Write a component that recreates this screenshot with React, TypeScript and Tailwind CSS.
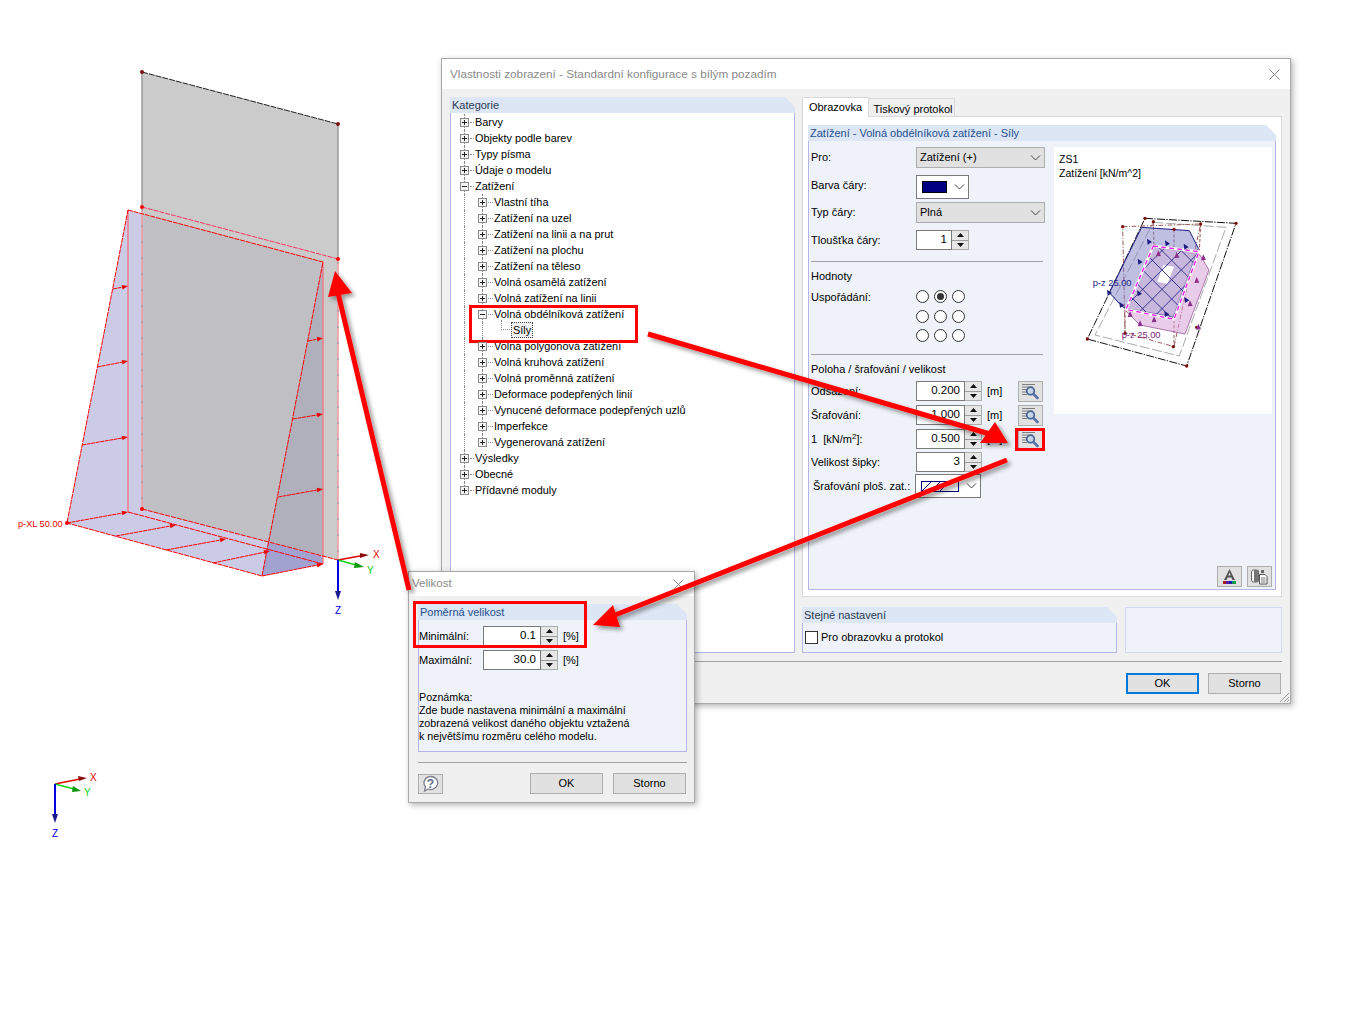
import React from "react";

const FONT = { fontFamily: '"Liberation Sans", Arial, sans-serif' };

function ChevronD() {
  return (
    <svg width="11" height="6" viewBox="0 0 11 6" className="shrink-0">
      <path d="M1 0.5 L5.5 5 L10 0.5" fill="none" stroke="#444" strokeWidth="1" />
    </svg>
  );
}

function Combo({ text }: { text: string }) {
  return (
    <div className="flex h-full w-[129px] items-center justify-between border border-[#adadad] bg-[#e1e1e1] pl-[3px] pr-[3px] text-[11px] text-black">
      <span>{text}</span>
      <ChevronD />
    </div>
  );
}

function Spinner() {
  return (
    <div className="flex h-full w-[17px] shrink-0 flex-col border border-l-0 border-[#adadad] bg-[#e6e6e6]">
      <div className="flex flex-1 items-center justify-center border-b border-[#9a9a9a]">
        <svg width="7" height="4" viewBox="0 0 7 4"><path d="M3.5 0 L7 4 L0 4 Z" fill="#111" /></svg>
      </div>
      <div className="flex flex-1 items-center justify-center">
        <svg width="7" height="4" viewBox="0 0 7 4"><path d="M0 0 L7 0 L3.5 4 Z" fill="#111" /></svg>
      </div>
    </div>
  );
}

function Spin({ value, width }: { value: string; width: string }) {
  return (
    <div className="flex h-full">
      <div className={`flex h-full items-center justify-end border border-[#7a7a7a] bg-white pr-[4px] text-[11.5px] text-black ${width}`}>
        {value}
      </div>
      <Spinner />
    </div>
  );
}

function SearchIcon() {
  return (
    <svg width="19" height="17" viewBox="0 0 19 17">
      <path d="M1 1.5H14M1 4H12M1 6.5H6M1 9H5M1 11.5H6" stroke="#7f7f7f" strokeWidth="1" />
      <circle cx="9.5" cy="8" r="3.8" fill="#c5d4e6" stroke="#3f5f8e" strokeWidth="1.6" />
      <path d="M12.5 11 L16.5 15" stroke="#5670a8" strokeWidth="2.6" strokeLinecap="round" />
    </svg>
  );
}

function IconButton({ children }: { children: React.ReactNode }) {
  return (
    <div className="flex h-[21px] w-[25px] shrink-0 items-center justify-center border border-[#adadad] bg-[#e1e1e1]">
      {children}
    </div>
  );
}

function Radio({ on }: { on?: boolean }) {
  return (
    <div className="flex h-[13px] w-[13px] items-center justify-center rounded-full border border-[#333] bg-white">
      {on && <div className="h-[7px] w-[7px] rounded-full bg-[#333]" />}
    </div>
  );
}

function GroupHeader({ text, dark }: { text: string; dark?: boolean }) {
  return (
    <div
      className={`h-[16px] bg-[#dce6f4] pl-[2px] text-[11px] leading-[16px] ${dark ? "text-[#2a3a55]" : "text-[#24508f]"} [clip-path:polygon(0_0,calc(100%-10px)_0,100%_10px,100%_100%,0_100%)]`}
    >
      {text}
    </div>
  );
}

type TreeRow = { t: string; lvl: 0 | 1 | 2; open?: boolean; last?: boolean };

const TREE: TreeRow[] = [
  { t: "Barvy", lvl: 0 },
  { t: "Objekty podle barev", lvl: 0 },
  { t: "Typy písma", lvl: 0 },
  { t: "Údaje o modelu", lvl: 0 },
  { t: "Zatížení", lvl: 0, open: true },
  { t: "Vlastní tíha", lvl: 1 },
  { t: "Zatížení na uzel", lvl: 1 },
  { t: "Zatížení na linii a na prut", lvl: 1 },
  { t: "Zatížení na plochu", lvl: 1 },
  { t: "Zatížení na těleso", lvl: 1 },
  { t: "Volná osamělá zatížení", lvl: 1 },
  { t: "Volná zatížení na linii", lvl: 1 },
  { t: "Volná obdélníková zatížení", lvl: 1, open: true },
  { t: "Síly", lvl: 2 },
  { t: "Volná polygonová zatížení", lvl: 1 },
  { t: "Volná kruhová zatížení", lvl: 1 },
  { t: "Volná proměnná zatížení", lvl: 1 },
  { t: "Deformace podepřených linií", lvl: 1 },
  { t: "Vynucené deformace podepřených uzlů", lvl: 1 },
  { t: "Imperfekce", lvl: 1 },
  { t: "Vygenerovaná zatížení", lvl: 1, last: true },
  { t: "Výsledky", lvl: 0 },
  { t: "Obecné", lvl: 0 },
  { t: "Přídavné moduly", lvl: 0, last: true },
];

function ExpandBox({ open }: { open?: boolean }) {
  return (
    <svg width="9" height="9" viewBox="0 0 9 9" className="shrink-0">
      <rect x="0.5" y="0.5" width="8" height="8" fill="#f4f4f4" stroke="#8a8a8a" />
      <path d={open ? "M2 4.5H7" : "M2 4.5H7M4.5 2V7"} stroke="#222" />
    </svg>
  );
}

function TreeItem({ r, inLoad }: { r: TreeRow; inLoad: boolean }) {
  const left = r.lvl === 0 ? "pl-[9px]" : r.lvl === 1 ? "pl-[27px]" : "pl-[60px]";
  return (
    <div className={`relative flex h-[16px] items-center text-[10.9px] text-black ${left}`}>
      <span className={`absolute left-[13px] top-0 w-0 border-l border-dotted border-[#8a8a8a] ${r.last && r.lvl === 0 ? "h-[8px]" : "h-[16px]"}`} />
      {inLoad && (
        <span className={`absolute left-[31px] top-0 w-0 border-l border-dotted border-[#8a8a8a] ${r.last ? "h-[8px]" : "h-[16px]"}`} />
      )}
      {r.lvl < 2 ? (
        <>
          <span className="relative z-10 flex"><ExpandBox open={r.open} /></span>
          <span className={`ml-[1px] mr-[1px] border-t border-dotted border-[#8a8a8a] ${r.lvl === 0 ? "w-[4px]" : "w-[5px]"}`} />
          <span>{r.t}</span>
        </>
      ) : (
        <>
          <span className="absolute left-[50px] top-[-2px] h-[10px] w-[9px] border-b border-l border-dotted border-[#8a8a8a]" />
          <span className="border border-dotted border-[#444] bg-[#f0f0f0] px-[1px] leading-[14px]">{r.t}</span>
        </>
      )}
    </div>
  );
}

function LabelRow({ label, h, mt, children, up }: { label: React.ReactNode; h: string; mt: string; children: React.ReactNode; up?: boolean }) {
  return (
    <div className={`flex items-center text-[11px] text-black ${h} ${mt}`}>
      <span className={`w-[105px] shrink-0 whitespace-nowrap ${up ? "mb-[4px]" : ""}`}>{label}</span>
      {children}
    </div>
  );
}

function ValueRow({ label, value, mt, unit }: { label: React.ReactNode; value: string; mt: string; unit?: boolean }) {
  return (
    <div className={`flex h-[20px] items-center text-[11px] text-black ${mt}`}>
      <span className="w-[105px] shrink-0 whitespace-nowrap">{label}</span>
      <Spin value={value} width="w-[49px]" />
      {unit && <span className="ml-[5px] w-[31px] shrink-0">[m]</span>}
      {unit && <IconButton><SearchIcon /></IconButton>}
    </div>
  );
}

function Preview() {
  const steps = Array.from({ length: 10 }, (_, i) => i);
  return (
    <svg viewBox="0 0 720 720" className="absolute left-[-4px] top-[-7px] h-[240px] w-[240px]">
      <defs>
        <clipPath id="hatchClip">
          <path d="M310 318 L447 335 L372 538 L228 508 Z" />
        </clipPath>
      </defs>
      <path d="M285 235 L558 250 L410 678 L112 597 Z" fill="none" stroke="#111" strokeWidth="3" strokeDasharray="24 4 4 4" />
      <path d="M310 247 L528 262 L388 648 L135 585 Z" fill="none" stroke="#aaa" strokeWidth="3" strokeDasharray="30 8" />
      <path d="M218 260 L452 252 L372 620 L225 578 Z" fill="none" stroke="#9a5a5a" strokeWidth="3" strokeDasharray="14 5 3 5" />
      <path d="M310 245 L312 320 M372 268 L372 330 M452 252 L448 335 M372 540 L372 620 M225 510 L225 578" stroke="#9a5a5a" strokeWidth="3" strokeDasharray="10 5" />
      <path d="M450 345 L477 390 L405 582 L270 555 L225 510 L310 320 Z" fill="#d7a3d7" fillOpacity="0.55" stroke="#8b3f8b" strokeWidth="2" />
      <path d="M275 262 L418 272 L445 325 L370 530 L225 505 L215 498 L178 458 Z" fill="#7f7fc6" fillOpacity="0.5" stroke="#1d1d80" strokeWidth="3" />
      <path d="M310 318 L447 335 L372 538 L228 508 Z" fill="#d9c4e2" fillOpacity="0.55" />
      <path d="M340 375 L372 380 L352 432 L322 425 Z" fill="#fff" />
      <g clipPath="url(#hatchClip)" stroke="#1d1d80" strokeWidth="2.5">
        {steps.map((i) => (
          <path key={`a${i}`} d={`M150 ${460 + i * 58} L550 ${60 + i * 58}`} />
        ))}
        {steps.map((i) => (
          <path key={`b${i}`} d={`M150 ${30 + i * 58} L550 ${430 + i * 58}`} />
        ))}
      </g>
      <path d="M310 318 L447 335 L372 538 L228 508 Z" fill="none" stroke="#fff" strokeWidth="8" />
      <path d="M310 318 L447 335 L372 538 L228 508 Z" fill="none" stroke="#e81fe8" strokeWidth="4" strokeDasharray="14 10" />
      {[[285, 235], [310, 245], [218, 260], [372, 268], [452, 252], [558, 250], [112, 597], [410, 678], [370, 620], [225, 580], [440, 562]].map(([x, y]) => (
        <circle key={`${x}-${y}`} cx={x} cy={y} r="5" fill="#7a1010" />
      ))}
      {[[298, 305], [352, 310], [408, 320], [270, 365], [178, 458], [215, 495], [350, 522], [410, 480], [268, 460]].map(([x, y]) => (
        <path key={`t${x}`} d={`M${x - 7} ${y - 9} L${x + 8} ${y + 1} L${x - 5} ${y + 9} Z`} fill="#1d1d80" />
      ))}
      {[[460, 352], [440, 420], [420, 490], [445, 560], [312, 538], [270, 550], [240, 522], [325, 340], [380, 345]].map(([x, y]) => (
        <path key={`u${x}`} d={`M${x - 7} ${y + 9} L${x} ${y - 9} L${x + 8} ${y + 8} Z`} fill="#8b2f8b" />
      ))}
      <text x="128" y="438" fontSize="28" fill="#1d1d80" style={FONT}>p-z 25.00</text>
      <text x="215" y="594" fontSize="28" fill="#7a1a7a" style={FONT}>p-z 25.00</text>
    </svg>
  );
}

function DialogFooterButton({ text, primary }: { text: string; primary?: boolean }) {
  return (
    <div
      className={`flex h-[21px] w-[73px] items-center justify-center bg-[#e1e1e1] text-[11px] text-black ${primary ? "border-2 border-[#0078d7]" : "border border-[#adadad]"}`}
    >
      {text}
    </div>
  );
}

function CloseX() {
  return (
    <svg width="11" height="11" viewBox="0 0 11 11">
      <path d="M0.5 0.5 L10.5 10.5 M10.5 0.5 L0.5 10.5" stroke="#8a8a8a" strokeWidth="1" />
    </svg>
  );
}

function MainDialog() {
  let inLoad = false;
  return (
    <div
      className="absolute left-[441px] top-[58px] flex h-[646px] w-[850px] flex-col border border-[#a9a9a9] bg-[#f0f0f0] shadow-[2px_2px_6px_rgba(0,0,0,0.3)]"
      style={FONT}
    >
      <div className="flex h-[30px] items-center justify-between bg-white pl-[8px] pr-[10px] text-[11.75px] text-[#8a8a8a]">
        <span>Vlastnosti zobrazení - Standardní konfigurace s bílým pozadím</span>
        <CloseX />
      </div>
      <div className="flex flex-col px-[8px] pt-[8px]">
        <div className="flex h-[556px] gap-[7px]">
          <div className="flex w-[345px] flex-col">
            <GroupHeader text="Kategorie" dark />
            <div className="flex-1 border border-t-0 border-[#b4b4e6] bg-white pt-[1px]">
              {TREE.map((r) => {
                const inner = inLoad;
                if (r.t === "Zatížení") inLoad = true;
                if (r.t === "Výsledky") inLoad = false;
                const show = r.t === "Výsledky" ? false : inner;
                return <TreeItem key={r.t} r={r} inLoad={show} />;
              })}
            </div>
          </div>
          <div className="flex w-[480px] flex-col">
            <div className="flex h-[19px] items-end whitespace-nowrap text-[11px] text-black">
              <div className="z-10 mb-[-1px] flex h-[20px] w-[67px] items-center justify-center border border-b-0 border-[#d9d9d9] bg-white">Obrazovka</div>
              <div className="flex h-[18px] w-[86px] items-center justify-center border border-l-0 border-b-0 border-[#d9d9d9] bg-[#f0f0f0] pl-[3px] pt-[3px]">Tiskový protokol</div>
            </div>
            <div className="h-[481px] border border-[#d9d9d9] bg-white px-[5px] pt-[8px]">
              <div className="flex h-[465px] flex-col">
                <GroupHeader text="Zatížení - Volná obdélníková zatížení - Síly" />
                <div className="flex flex-1 border border-t-0 border-[#b4b4e6] bg-[#eff3f9] pl-[1px]">
                  <div className="w-[235px] shrink-0 pl-[1px]">
                    <LabelRow label="Pro:" h="h-[21px]" mt="mt-[6px]"><Combo text="Zatížení (+)" /></LabelRow>
                    <LabelRow label="Barva čáry:" h="h-[24px]" mt="mt-[7px]" up>
                      <div className="flex h-full w-[53px] items-center justify-between border border-[#7a7a7a] bg-white pl-[5px] pr-[3px]">
                        <div className="h-[12px] w-[25px] border border-black bg-[#000080]" />
                        <ChevronD />
                      </div>
                    </LabelRow>
                    <LabelRow label="Typ čáry:" h="h-[21px]" mt="mt-[3px]"><Combo text="Plná" /></LabelRow>
                    <LabelRow label="Tloušťka čáry:" h="h-[20px]" mt="mt-[7px]"><Spin value="1" width="w-[36px]" /></LabelRow>
                    <div className="mt-[11px] h-px w-[232px] bg-[#a0a0a0]" />
                    <div className="mt-[7px] h-[14px] text-[11px] leading-[14px] text-black">Hodnoty</div>
                    <div className="mt-[7px] flex text-[11px] text-black">
                      <span className="w-[105px] pt-[1px] leading-[13px]">Uspořádání:</span>
                      <div className="grid grid-cols-3 gap-x-[5px] gap-y-[6.5px]">
                        <Radio /><Radio on /><Radio />
                        <Radio /><Radio /><Radio />
                        <Radio /><Radio /><Radio />
                      </div>
                    </div>
                    <div className="mt-[12px] h-px w-[232px] bg-[#a0a0a0]" />
                    <div className="mt-[7px] h-[14px] text-[11px] leading-[14px] text-black">Poloha / šrafování / velikost</div>
                    <ValueRow label="Odsazení:" value="0.200" mt="mt-[5px]" unit />
                    <ValueRow label="Šrafování:" value="1.000" mt="mt-[4px]" unit />
                    <ValueRow label={<span>1&nbsp; [kN/m<sup className="text-[8px]">2</sup>]:</span>} value="0.500" mt="mt-[4px]" unit />
                    <ValueRow label="Velikost šipky:" value="3" mt="mt-[3px]" />
                    <div className="mt-[2px] flex h-[24px] items-center text-[11px] text-black">
                      <span className="ml-[2px] w-[102px] shrink-0 whitespace-nowrap">Šrafování ploš. zat.:</span>
                      <div className="flex h-full w-[66px] items-center justify-between border border-[#7a7a7a] bg-white pl-[5px] pr-[3px]">
                        <svg width="38" height="11" viewBox="0 0 38 11">
                          <rect x="0.5" y="0.5" width="37" height="10" fill="#fff" stroke="#000080" />
                          <path d="M1 10 L10 1 M19 10 L28 1 M10 10 L19 1" stroke="#000080" />
                        </svg>
                        <ChevronD />
                      </div>
                    </div>
                  </div>
                  <div className="flex flex-1 flex-col pl-[9px] pr-[3px] pt-[6px]">
                    <div className="relative h-[267px] w-[218px] bg-white pl-[5px] pt-[5px] text-[10.5px] leading-[14px] text-black">
                      <div>ZS1</div>
                      <div>Zatížení [kN/m^2]</div>
                      <Preview />
                    </div>
                    <div className="mt-[152px] flex justify-end gap-[5px]">
                      <IconButton>
                        <svg width="19" height="17" viewBox="0 0 19 17">
                          <path d="M9.5 1 L4 12 H6.6 L7.6 9.5 H11.4 L12.4 12 H15 Z M8.4 7.5 L9.5 4.5 L10.6 7.5 Z" fill="#555" fillRule="evenodd" />
                          <rect x="3" y="13" width="3" height="3" fill="#a02020" />
                          <rect x="6" y="13" width="3" height="3" fill="#5a1f9c" />
                          <rect x="9" y="13" width="3" height="3" fill="#2020b0" />
                          <rect x="12" y="13" width="2" height="3" fill="#109060" />
                          <rect x="14" y="13" width="2" height="3" fill="#10a040" />
                        </svg>
                      </IconButton>
                      <IconButton>
                        <svg width="19" height="17" viewBox="0 0 19 17">
                          <rect x="1.5" y="2" width="7" height="12" rx="2" fill="#fff" stroke="#666" />
                          <rect x="4" y="2" width="4.5" height="12" fill="#777" />
                          <path d="M9.5 6.5 H15 L17 8.5 V16 H9.5 Z" fill="#fff" stroke="#555" />
                          <path d="M11 10 H15.5 M11 12 H15.5 M11 14 H15.5" stroke="#777" />
                          <rect x="11" y="2" width="3" height="3" fill="#666" />
                        </svg>
                      </IconButton>
                    </div>
                  </div>
                </div>
              </div>
            </div>
            <div className="mt-[10px] flex h-[46px] gap-[8px]">
              <div className="flex w-[315px] flex-col">
                <GroupHeader text="Stejné nastavení" dark />
                <div className="flex flex-1 items-center gap-[3px] border border-t-0 border-[#b4b4e6] bg-[#eff3f9] pl-[2px] text-[11px] text-black">
                  <div className="h-[13px] w-[13px] border border-[#333] bg-white" />
                  <span>Pro obrazovku a protokol</span>
                </div>
              </div>
              <div className="w-[157px] border border-[#d4d8f0] bg-[#eff3f9]" />
            </div>
          </div>
        </div>
        <div className="mt-[8px] h-px w-full bg-[#a0a0a0]" />
        <div className="mt-[11px] flex justify-end gap-[9px] pr-[1px]">
          <DialogFooterButton text="OK" primary />
          <DialogFooterButton text="Storno" />
        </div>
      </div>
      <svg width="12" height="12" viewBox="0 0 12 12" className="absolute bottom-0 right-0">
        <path d="M11 2 L2 11 M11 6 L6 11 M11 9 L9 11" stroke="#9a9a9a" />
      </svg>
    </div>
  );
}

function SmallDialog() {
  return (
    <div
      className="absolute left-[408px] top-[571px] flex h-[232px] w-[287px] flex-col border border-[#a9a9a9] bg-[#f0f0f0] shadow-[2px_2px_6px_rgba(0,0,0,0.3)]"
      style={FONT}
    >
      <div className="flex h-[24px] items-center justify-between bg-white pl-[3px] pr-[10px] text-[11.5px] text-[#8a8a8a]">
        <span>Velikost</span>
        <CloseX />
      </div>
      <div className="flex flex-col pl-[9px] pr-[8px] pt-[8px]">
        <div className="flex h-[148px] w-[269px] flex-col">
          <GroupHeader text="Poměrná velikost" />
          <div className="flex-1 border border-t-0 border-[#b4b4e6] bg-[#eff3f9] text-[11px] text-black">
            <div className="mt-[6px] flex h-[20px] items-center">
              <span className="w-[64px] shrink-0">Minimální:</span>
              <Spin value="0.1" width="w-[58px]" />
              <span className="ml-[5px]">[%]</span>
            </div>
            <div className="mt-[4px] flex h-[20px] items-center">
              <span className="w-[64px] shrink-0">Maximální:</span>
              <Spin value="30.0" width="w-[58px]" />
              <span className="ml-[5px]">[%]</span>
            </div>
            <div className="mt-[21px] text-[10.7px] leading-[13px]">
              <div>Poznámka:</div>
              <div>Zde bude nastavena minimální a maximální</div>
              <div>zobrazená velikost daného objektu vztažená</div>
              <div>k největšímu rozměru celého modelu.</div>
            </div>
          </div>
        </div>
        <div className="mt-[10px] h-px w-[269px] bg-[#a0a0a0]" />
        <div className="mt-[10px] flex items-center">
          <div className="flex h-[20px] w-[25px] items-center justify-center border border-[#adadad] bg-[#e1e1e1]">
            <svg width="17" height="17" viewBox="0 0 17 17">
              <path d="M8.5 1.5 A7 6.5 0 1 1 6 14 L2.5 16 L3.5 12 A7 6.5 0 0 1 8.5 1.5 Z" fill="#fff" stroke="#7d7d8c" strokeWidth="1.3" />
              <text x="8.5" y="12.5" textAnchor="middle" fontSize="12" fontWeight="700" fill="#5b6a8c" style={FONT}>?</text>
            </svg>
          </div>
          <div className="ml-auto flex gap-[10px]">
            <DialogFooterButton text="OK" />
            <DialogFooterButton text="Storno" />
          </div>
        </div>
      </div>
    </div>
  );
}

function SmallArrow({ a, b }: { a: [number, number]; b: [number, number] }) {
  const dx = b[0] - a[0];
  const dy = b[1] - a[1];
  const l = Math.hypot(dx, dy);
  const ux = dx / l;
  const uy = dy / l;
  const bx = b[0] - ux * 6;
  const by = b[1] - uy * 6;
  return (
    <g>
      <path d={`M${a[0]} ${a[1]} L${bx} ${by}`} stroke="#f00" strokeWidth="1" strokeDasharray="4 0.6" />
      <path d={`M${b[0]} ${b[1]} L${bx - uy * 2.3} ${by + ux * 2.3} L${bx + uy * 2.3} ${by - ux * 2.3} Z`} fill="#e80000" />
    </g>
  );
}

function Model() {
  const rows: [[number, number], [number, number]][] = [
    [[113, 289], [128, 286]],
    [[97, 367], [128, 361]],
    [[82, 445], [128, 437]],
    [[308, 341], [323, 338]],
    [[293, 419], [323, 414]],
    [[278, 497], [323, 489]],
    [[67, 523], [128, 512]],
    [[116, 536], [176, 525]],
    [[166, 550], [226, 539]],
    [[213, 563], [270, 551]],
    [[262, 576], [323, 564]],
  ];
  return (
    <svg className="absolute left-0 top-0 h-[1017px] w-[1357px]" viewBox="0 0 1357 1017" style={FONT}>
      <path d="M142 72 L338 124 V560 L142 509 Z" fill="#cbcbcb" />
      <path d="M128 210 L67 523 L262 576 L323 564 V262 Z" fill="#cbcbe6" />
      <path d="M142 214 L323 262 L268 542 L142 509 Z" fill="#bfbfc4" />
      <path d="M323 262 L268 542 L323 557 Z" fill="#b0b0bd" />
      <path d="M268 542 L323 557 V564 L262 576 Z" fill="#a2a2d0" />
      <path d="M142 72 L338 124" stroke="#222" strokeWidth="1" strokeDasharray="6 1" />
      <path d="M142 72 V207 M338 124 V259" stroke="#9a9a9a" strokeWidth="1.5" />
      <path d="M142 207 V509 M338 259 V560" stroke="#f49aa0" strokeWidth="1.5" />
      <path d="M142 209 V509 M338 262 V560" stroke="#8a9aa5" strokeWidth="1" strokeDasharray="2 14" />
      <path d="M128 210 V512 M323 262 V564" stroke="#f07c8a" strokeWidth="1.5" />
      <path d="M142 207 L338 259" stroke="#f36" strokeWidth="1" strokeDasharray="5 1" />
      <path d="M142 509 L338 560" stroke="#f00" strokeWidth="1" strokeDasharray="5 1" />
      <path d="M128 210 L323 262 L262 576 L67 523 Z M128 512 L323 564" fill="none" stroke="#f00" strokeWidth="1" strokeDasharray="5 0.8" />
      {rows.map(([a, b]) => (
        <SmallArrow key={`${a[0]}-${a[1]}`} a={a} b={b} />
      ))}
      <circle cx="142" cy="72" r="2" fill="#7a1010" />
      <circle cx="338" cy="124" r="2" fill="#7a1010" />
      <circle cx="142" cy="207" r="2" fill="#f00" />
      <circle cx="142" cy="509" r="2" fill="#f00" />
      <circle cx="338" cy="259" r="2" fill="#f00" />
      <circle cx="67" cy="523" r="2" fill="#f00" />
      <text x="18" y="527" fontSize="9.2" fill="#e00000">p-XL 50.00</text>

      <path d="M338 560 L360 556" stroke="#e00000" strokeWidth="1.5" />
      <path d="M360 553 L369 555 L360 558 Z" fill="#8a1010" />
      <path d="M338 560 L356 565" stroke="#10d010" strokeWidth="1.5" />
      <path d="M355 562 L364 567 L354 568 Z" fill="#0a9a0a" />
      <path d="M338 560 V592" stroke="#0000e0" strokeWidth="2" />
      <path d="M335 591 H341 L338 600 Z" fill="#1a1a90" />
      <text x="373" y="558" fontSize="10" fill="#e00000">X</text>
      <text x="367" y="574" fontSize="10" fill="#10d010">Y</text>
      <text x="335" y="614" fontSize="10" fill="#0000e0">Z</text>

      <path d="M55 784 L80 779" stroke="#e00000" strokeWidth="1.5" />
      <path d="M78 776 L87 778 L79 781 Z" fill="#8a1010" />
      <path d="M55 784 L74 789" stroke="#10d010" strokeWidth="1.5" />
      <path d="M73 786 L81 791 L72 792 Z" fill="#0a9a0a" />
      <path d="M55 784 V815" stroke="#0000e0" strokeWidth="2" />
      <path d="M52 814 H58 L55 823 Z" fill="#1a1a90" />
      <text x="90" y="781" fontSize="10" fill="#e00000">X</text>
      <text x="84" y="796" fontSize="10" fill="#10d010">Y</text>
      <text x="52" y="837" fontSize="10" fill="#0000e0">Z</text>
    </svg>
  );
}

function Overlay() {
  return (
    <svg className="absolute left-0 top-0 h-[1017px] w-[1357px]" viewBox="0 0 1357 1017">
      <defs>
        <filter id="sh" x="-10%" y="-10%" width="120%" height="120%">
          <feDropShadow dx="3" dy="3" stdDeviation="2" floodColor="#000" floodOpacity="0.4" />
        </filter>
      </defs>
      <g fill="none" stroke="#f00" strokeWidth="3">
        <rect x="470.5" y="306.5" width="166" height="35" />
        <rect x="1016.5" y="429.5" width="27" height="20" />
        <rect x="414.5" y="602.5" width="171" height="44" />
      </g>
      <g filter="url(#sh)">
        <path d="M338 293 L409 590" stroke="#f00" strokeWidth="5" />
        <path d="M335 271 L328 297 L352 293 Z" fill="#f00" />
        <path d="M648 334 L990 434" stroke="#f00" strokeWidth="5" />
        <path d="M1008 443 L995 422 L980 443 Z" fill="#f00" />
        <path d="M1007 460 L610 617" stroke="#f00" strokeWidth="5" />
        <path d="M593 625 L613 605 L620 627 Z" fill="#f00" />
      </g>
    </svg>
  );
}

export default function App() {
  return (
    <div className="relative h-[1017px] w-[1357px] overflow-hidden bg-white">
      <Model />
      <MainDialog />
      <SmallDialog />
      <Overlay />
    </div>
  );
}
